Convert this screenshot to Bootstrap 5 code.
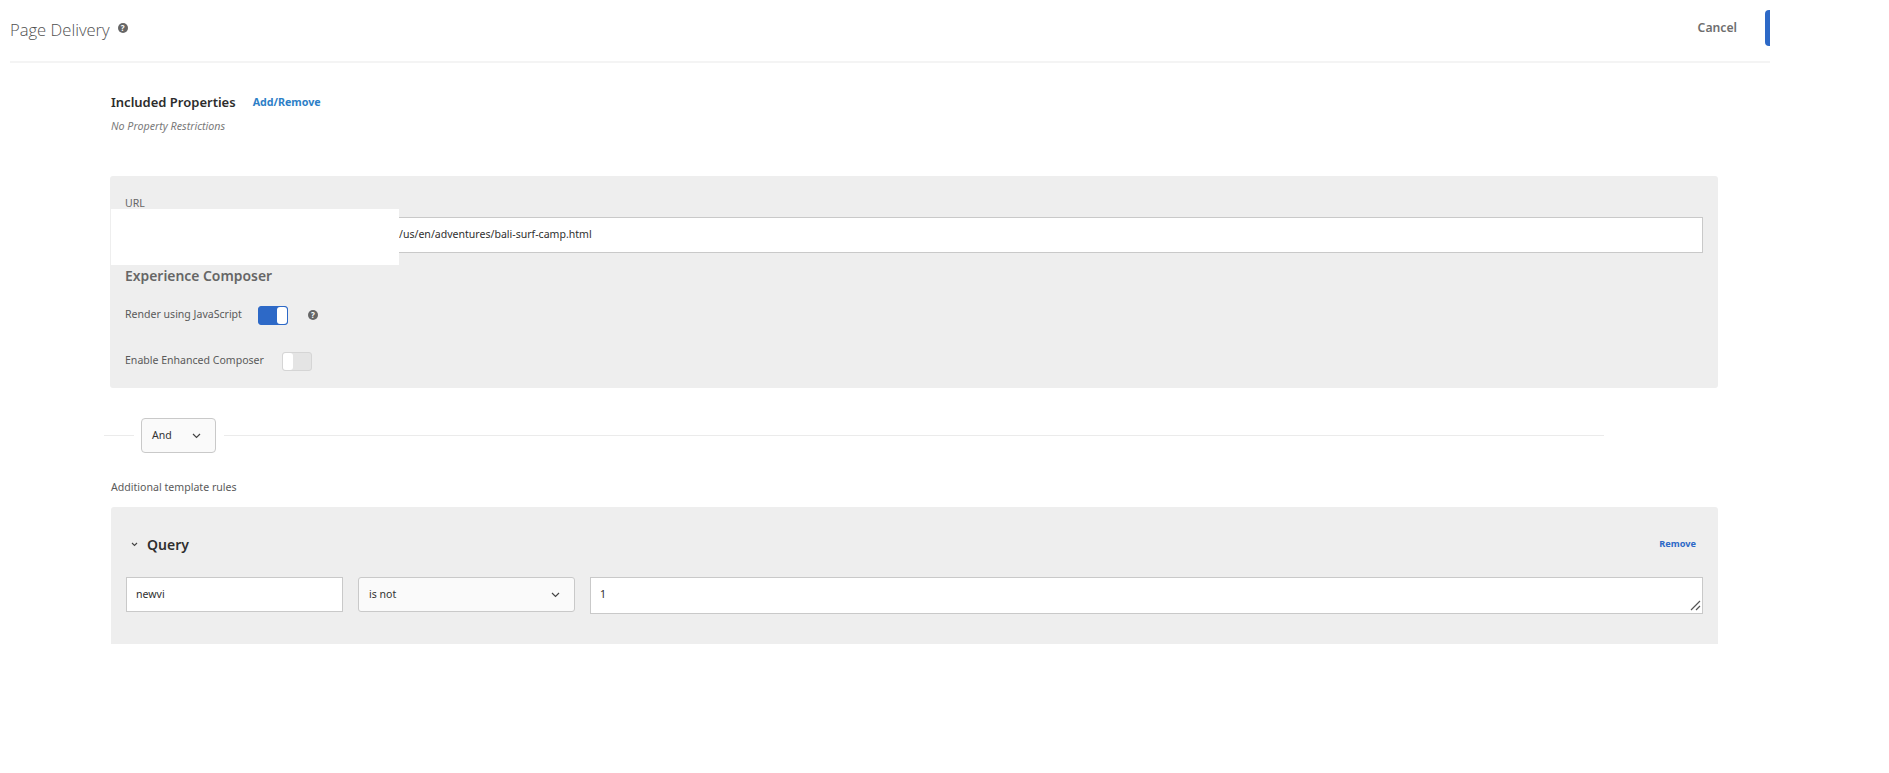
<!DOCTYPE html>
<html lang="en">
<head>
    <meta charset="UTF-8">
    <title>Page Delivery</title>
    <link href="https://cdn.jsdelivr.net/npm/bootstrap@5.3.0/dist/css/bootstrap.min.css" rel="stylesheet">
    <style>
        body { font-family: "Noto Sans", "Open Sans", sans-serif; font-size: 10.55px; color: #4b4b4b; background: #fff; }
        .page-wrap { width: 1770px; padding-left: 10px; }
        .top-bar { height: 63px; border-bottom: 2px solid #f4f4f4; padding-top: 10px; }
        .page-title { font-family: "Open Sans", sans-serif; font-weight: 300; font-size: 16.6px; color: #505050; margin: 2px 0 0; line-height: 36px; }
        .help-dot { width: 10px; height: 10px; border-radius: 50%; background: #666; color: #fff; font-size: 8px; line-height: 10px; font-weight: 700; text-align: center; }
        .title-help { margin-top: 13px; }
        .cancel-link { font-size: 12.2px; font-weight: 600; color: #6e6e6e; text-decoration: none; margin-top: 9px; margin-right: 28px; }
        .save-edge { width: 5px; height: 36px; background: #2d69c7; border-radius: 4px 0 0 4px; }
        .main-area { margin-left: 101px; width: 1607px; }
        .props-head { padding-top: 30px; height: 83px; }
        .props-title { font-size: 13px; font-weight: 600; color: #2c2c2c; line-height: 18px; margin-right: 17px; }
        .props-link { font-size: 10.7px; font-weight: 700; color: #2d7fc7; text-decoration: none; }
        .props-note { font-size: 10.7px; font-style: italic; color: #7a7a7a; margin-top: 8px; line-height: 15px; }
        .gray-panel { background: #eeeeee; border-radius: 3px; }
        .url-panel { height: 212px; margin-top: 30px; margin-left: -1px; padding: 20px 15px 0 15px; position: relative; }
        .url-label { line-height: 15px; color: #666; margin-bottom: 6px; }
        .flat-input { display: block; background: #fff; border: 1px solid #c9c9c9; font-size: 10.55px; color: #2f2f2f; padding: 0 9px; }
        .url-input { height: 36px; line-height: 33px; padding-left: 273px; }
        .redact-box { position: absolute; left: 1px; top: 33px; width: 288px; height: 56px; background: #fff; }
        .composer-title { font-size: 13.9px; font-weight: 600; color: #666; line-height: 20px; margin-top: 13px; }
        .toggle-row { height: 20px; color: #5a5a5a; }
        .toggle-one { margin-top: 19px; }
        .toggle-two { margin-top: 26px; }
        .switch-box { width: 30px; height: 19px; border-radius: 3px; display: flex; }
        .switch-on { background: #2d69c7; border: 1px solid #2d69c7; justify-content: flex-end; margin-left: 16px; margin-right: 20px; }
        .switch-off { background: #e4e4e4; border: 1px solid #d5d5d5; margin-left: 18px; }
        .switch-knob { width: 10px; background: #fff; border-radius: 3px; }
        .and-row { height: 35px; margin-top: 30px; margin-left: -7px; width: 1500px; }
        .rule-line { height: 1px; background: #ebebeb; }
        .rule-short { width: 30px; }
        .and-select { width: 75px; height: 35px; margin: 0 8px 0 7px; background: #fafafa; border: 1px solid #c9c9c9; border-radius: 4px; padding: 0 14px 0 10px; color: #333; }
        .rules-label { font-size: 10.6px; color: #5a5a5a; line-height: 15px; margin-top: 27px; }
        .query-panel { height: 137px; margin-top: 12px; padding: 24px 15px 0 15px; border-radius: 3px 3px 0 0; }
        .query-head { height: 26px; margin-bottom: 20px; padding: 0 7px 0 5px; }
        .query-title { font-size: 14px; font-weight: 600; color: #2f2f2f; margin-left: 9px; }
        .query-remove { font-size: 9.2px; font-weight: 700; color: #2d69c7; text-decoration: none; }
        .field-name { width: 217px; height: 35px; line-height: 33px; }
        .field-select { width: 217px; height: 35px; margin: 0 15px; background: #fafafa; border: 1px solid #c9c9c9; border-radius: 3px; padding: 0 14px 0 10px; color: #333; }
        .field-value { flex: 1; height: 37px; line-height: 33px; position: relative; }
        .resize-grip { position: absolute; right: 1px; bottom: 2px; }
    </style>
</head>
<body>
<div class="page-wrap">
    <div class="top-bar d-flex justify-content-between">
        <div class="d-flex align-items-start gap-2">
            <h1 class="page-title">Page Delivery</h1>
            <div class="help-dot title-help">?</div>
        </div>
        <div class="d-flex align-items-start">
            <a class="cancel-link" href="#">Cancel</a>
            <div class="save-edge"></div>
        </div>
    </div>

    <div class="main-area">
        <div class="props-head">
            <div class="d-flex align-items-center">
                <span class="props-title">Included Properties</span>
                <a class="props-link" href="#">Add/Remove</a>
            </div>
            <div class="props-note">No Property Restrictions</div>
        </div>

        <div class="gray-panel url-panel">
            <div class="url-label">URL</div>
            <div class="flat-input url-input">/us/en/adventures/bali-surf-camp.html</div>
            <div class="redact-box"></div>
            <div class="composer-title">Experience Composer</div>
            <div class="toggle-row toggle-one d-flex align-items-center">
                <span>Render using JavaScript</span>
                <div class="switch-box switch-on"><div class="switch-knob"></div></div>
                <div class="help-dot">?</div>
            </div>
            <div class="toggle-row toggle-two d-flex align-items-center">
                <span>Enable Enhanced Composer</span>
                <div class="switch-box switch-off"><div class="switch-knob"></div></div>
            </div>
        </div>

        <div class="and-row d-flex align-items-center">
            <div class="rule-line rule-short"></div>
            <div class="and-select d-flex align-items-center justify-content-between">
                <span>And</span>
                <svg width="9" height="6" viewBox="0 0 9 6"><path d="M1 1l3.5 3.5L8 1" fill="none" stroke="#444" stroke-width="1.2"/></svg>
            </div>
            <div class="rule-line flex-grow-1"></div>
        </div>

        <div class="rules-label">Additional template rules</div>

        <div class="gray-panel query-panel">
            <div class="query-head d-flex align-items-center justify-content-between">
                <div class="d-flex align-items-center">
                    <svg width="7" height="5" viewBox="0 0 7 5"><path d="M1 1l2.5 2.5L6 1" fill="none" stroke="#444" stroke-width="1.1"/></svg>
                    <span class="query-title">Query</span>
                </div>
                <a class="query-remove" href="#">Remove</a>
            </div>
            <div class="d-flex align-items-start">
                <div class="flat-input field-name">newvi</div>
                <div class="field-select d-flex align-items-center justify-content-between">
                    <span>is not</span>
                    <svg width="9" height="6" viewBox="0 0 9 6"><path d="M1 1l3.5 3.5L8 1" fill="none" stroke="#444" stroke-width="1.2"/></svg>
                </div>
                <div class="flat-input field-value">1
                    <svg class="resize-grip" width="11" height="11" viewBox="0 0 11 11"><path d="M1 10L10 1M6 10l4-4" stroke="#555" stroke-width="1.2" fill="none"/></svg>
                </div>
            </div>
        </div>
    </div>
</div>
<script src="https://cdn.jsdelivr.net/npm/bootstrap@5.3.0/dist/js/bootstrap.bundle.min.js"></script>
</body>
</html>
